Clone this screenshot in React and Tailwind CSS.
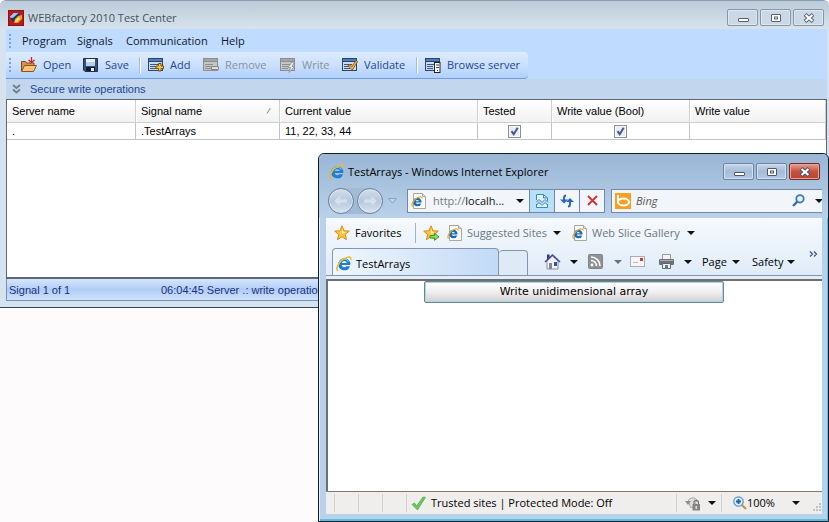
import React from 'react';

const UI = "font-['Open_Sans','Noto_Sans',sans-serif]";

function CenterLogo() {
  return (
    <svg width="16" height="16" viewBox="0 0 16 16" aria-hidden="true">
      <rect width="16" height="16" fill="#8f1016" />
      <rect x="1" y="1" width="14" height="14" fill="#b81c1c" />
      <path d="M2 7 6 3h5L9 6 5 9z" fill="#5a9fd8" />
      <path d="M2 7 6 3h3L5 8z" fill="#cfe4f3" />
      <path d="M3 8l4-2 4-3 1 3-5 6-3-1z" fill="#23306e" />
      <path d="M2 7 6 3h4L5 8z" fill="#9cc8ea" />
      <path d="M7 9 10 6l4-1v4l-4 4H6z" fill="#f0a51e" />
      <path d="M8 9.500 10.500 7.500 12 8l-3 4H7z" fill="#ffe37a" />
    </svg>
  );
}

function FolderIcon() {
  return (
    <svg width="17" height="16" viewBox="0 0 17 16" aria-hidden="true">
      <path d="M1.500 14V4.500h4l1 1.500h7.500v3" fill="#d8954a" stroke="#7a4a1a" />
      <path d="M1.500 14.500 4.500 8.500h12l-3 6z" fill="#f9c477" stroke="#8a5420" />
      <path d="M11.500 0v5M8.500 3 11.500 5.500 14.500 3" fill="none" stroke="#d81e1e" strokeWidth="1.300" />
    </svg>
  );
}

function DiskIcon() {
  return (
    <svg width="16" height="16" viewBox="0 0 16 16" aria-hidden="true">
      <path d="M.5 1.500h14v13H2l-1.500-1.500z" fill="#34507c" stroke="#1c3154" />
      <rect x="3" y="2" width="9" height="7" fill="#b9cfe8" />
      <rect x="3" y="2" width="9" height="3" fill="#e8f1fa" />
      <rect x="3" y="10" width="9" height="4" fill="#141c2a" />
      <rect x="8" y="11" width="3" height="3" fill="#e8eef6" />
    </svg>
  );
}

function FormIcon({ kind }) {
  const off = kind === 'remove' || kind === 'write';
  const dark = off ? '#8c8c8c' : '#34425c';
  const bar = off ? '#a5a5a5' : '#3f82d2';
  const fill = off ? '#c4c6ca' : '#c9dcf2';
  return (
    <svg width="16" height="16" viewBox="0 0 16 16" aria-hidden="true">
      <rect x=".5" y="1.500" width="14" height="12" fill={fill} stroke={dark} />
      <rect x="1" y="2" width="13" height="2" fill={bar} />
      <path d="M1 4.500h13" stroke={dark} />
      <path d="M2 7.500h8M2 9.500h6M2 11.500h6" stroke={off ? '#8f8f8f' : '#3d5680'} />
      {kind === 'add' && <path d="M10.500 6.500h2.500v2.500h2.500v2.500h-2.500v2.500h-2.500v-2.500H8v-2.500h2.500z" fill="#ffc83a" stroke="#7c4c10" />}
      {kind === 'remove' && <path d="M8.500 9.500h7v3h-7z" fill="#ddd" stroke="#888" />}
      {kind === 'write' && <path d="M12 5 8 10.500h2.500L9 15.500l5.500-6H12L14.500 5z" fill="#ececec" stroke="#8a8a8a" strokeWidth=".8" />}
      {kind === 'validate' && <path d="M6 8.500 8 7.500l1.800 2.200L14 3.500l1.700 1L10.300 13z" fill="#fbb034" stroke="#7c4c10" strokeWidth=".8" />}
      {kind === 'browse' && (
        <g>
          <rect x="9.500" y="5.500" width="5.500" height="10" fill="#fff" stroke="#222" />
          <path d="M11 8h3M11 10.500h3M12 13.500h1" stroke="#444" />
        </g>
      )}
    </svg>
  );
}

function EIcon() {
  return (
    <svg width="16" height="16" viewBox="0 0 16 16" aria-hidden="true" className="shrink-0">
      <path d="M8.300 2.200a6 6 0 0 0-6 6.100 6 6 0 0 0 11.700 1.900h-3.600a2.600 2.600 0 0 1-4.700-1.100h8.600a6 6 0 0 0-6-6.900zM5.800 7a2.600 2.600 0 0 1 5 0z" fill="#1f7fd0" />
      <path d="M3.500 6.500a5 5 0 0 1 9-1" fill="none" stroke="#6ec6f4" strokeWidth="1.200" />
      <path d="M2.200 14.800C-.8 13.500 1.800 7.600 6 4.200 10.200.8 15.400-.4 14.900 3.800" fill="none" stroke="#eeb92c" strokeWidth="1.500" />
    </svg>
  );
}

function PageIcon() {
  return (
    <svg width="16" height="16" viewBox="0 0 16 16" aria-hidden="true" className="shrink-0">
      <path d="M2.500.5h9l3 3v12h-12z" fill="#fdfdfd" stroke="#a8a8a0" />
      <path d="M11.500.5v3h3" fill="#ddd" stroke="#a8a8a0" />
      <path d="M6.300 4.800a4.100 4.100 0 0 0-4 4.200 4.100 4.100 0 0 0 8 1.400H7.700a1.800 1.800 0 0 1-3-.8h5.800a4.100 4.100 0 0 0-4.200-4.800zM4.700 8.200a1.700 1.700 0 0 1 3.200 0z" fill="#1b6cc0" />
      <path d="M1.800 13.500C-.3 12.300 1.600 8.500 4.600 6 7.600 3.600 11.300 2.800 11 5.600" fill="none" stroke="#e2ac28" strokeWidth="1.200" />
    </svg>
  );
}

function Star({ arrow }) {
  return (
    <svg width="17" height="16" viewBox="0 0 17 16" aria-hidden="true" className="shrink-0">
      <path d="M8 .8 10 5.800l5.300.3-4.100 3.400 1.400 5.200L8 11.800l-4.600 2.900 1.400-5.200L.7 6.100 6 5.800z" fill="#fdc53b" stroke="#d98a1c" />
      <path d="M8 3 9.200 6.800l3 .2L8 9z" fill="#fff0a8" />
      {arrow && <path d="M7 10.500h4.500V8.300l4.500 3.500-4.500 3.500v-2.300H7z" fill="#8be05a" stroke="#3a9426" />}
    </svg>
  );
}

function Caret({ muted }) {
  return (
    <svg width="8" height="4" viewBox="0 0 8 4" aria-hidden="true" className="shrink-0">
      <path d="M0 0h8L4 4z" fill={muted ? '#68717c' : '#111'} />
    </svg>
  );
}

function WindowGlyph({ kind, stroke }) {
  return (
    <svg width="14" height="12" viewBox="0 0 14 12" aria-hidden="true">
      {kind === 'min' && <rect x="2.500" y="6.500" width="10" height="3" rx=".5" fill="#fff" stroke={stroke} />}
      {kind === 'max' && (
        <g fill="#fff" stroke={stroke}>
          <rect x="2.500" y="2.500" width="9" height="7" rx=".5" />
          <rect x="5.500" y="5" width="3" height="2" />
        </g>
      )}
      {kind === 'close' && (
        <g fill="none">
          <path d="M3 2.500l8 7M11 2.500l-8 7" stroke={stroke} strokeWidth="4" />
          <path d="M3.600 3l6.800 6M10.400 3l-6.800 6" stroke="#fff" strokeWidth="2.200" />
        </g>
      )}
    </svg>
  );
}

function CenterWindowButton({ kind, label }) {
  return (
    <button aria-label={label} className="flex h-[17px] w-[31px] items-center justify-center rounded-xs border border-[#8795a8] bg-[#cbd9e6] shadow-[inset_0_0_0_1px_#dde7f0]">
      <WindowGlyph kind={kind} stroke="#57606e" />
    </button>
  );
}

function BrowserWindowButton({ kind, label }) {
  const tone =
    kind === 'close'
      ? 'border-[#7a2a26] bg-linear-to-b from-[#e3a094] via-[#c8503e] to-[#b8452e] shadow-[inset_0_0_0_1px_#e0a69c]'
      : 'border-[#6b83a3] bg-linear-to-b from-[#c6d7ea] via-[#a5bdd8] to-[#b3cae4] shadow-[inset_0_0_0_1px_#d3e1f0]';
  return (
    <button aria-label={label} className={'flex h-[17px] w-[31px] items-center justify-center rounded-xs border ' + tone}>
      <WindowGlyph kind={kind} stroke="#4b5666" />
    </button>
  );
}

function Grip() {
  return (
    <span className="flex w-[2px] flex-col gap-[2px]" aria-hidden="true">
      <i className="size-[2px] bg-[#7da1d6]" />
      <i className="size-[2px] bg-[#7da1d6]" />
      <i className="size-[2px] bg-[#7da1d6]" />
      <i className="size-[2px] bg-[#7da1d6]" />
    </span>
  );
}

function ToolButton({ icon, label, width, disabled }) {
  return (
    <button disabled={disabled} className={'flex shrink-0 items-center gap-[6px] ' + width + (disabled ? ' text-[#8b929c]' : ' text-[#1f4591]')}>
      <span className="shrink-0">{icon}</span>
      {label}
    </button>
  );
}

function Check({ label }) {
  return (
    <label className="mx-auto grid size-[13px] place-items-center">
      <input type="checkbox" defaultChecked aria-label={label} className="peer col-start-1 row-start-1 size-[13px] appearance-none border border-[#8a8f94] bg-[#e9ecf1] shadow-[inset_0_0_0_1px_#fafafa]" />
      <svg width="11" height="11" viewBox="0 0 11 11" aria-hidden="true" className="invisible col-start-1 row-start-1 peer-checked:visible">
        <path d="M2.500 5.200 4.700 8.200 8.700 1.800" fill="none" stroke="#44588f" strokeWidth="2" />
      </svg>
    </label>
  );
}

function SignalTable() {
  const th = 'border-r border-b border-[#d0d0d0] px-[5px] text-left font-normal shadow-[inset_1px_1px_0_#fff]';
  const td = 'border-r border-b border-[#c3c3c3] px-[5px]';
  return (
    <table className="w-full table-fixed border-separate border-spacing-0 font-['Liberation_Sans',Arial,sans-serif] text-[11px] leading-4 text-black">
      <colgroup>
        <col className="w-[129px]" />
        <col className="w-[144px]" />
        <col className="w-[198px]" />
        <col className="w-[74px]" />
        <col className="w-[138px]" />
        <col />
      </colgroup>
      <thead>
        <tr className="h-[23px] bg-linear-to-b from-white to-[#f1f1f1]">
          <th className={th}>Server name</th>
          <th className={th}>
            <span className="flex items-center justify-between">
              Signal name
              <svg width="8" height="6" viewBox="0 0 8 6" aria-hidden="true"><path d="M1 5.500 4 .5v1" fill="none" stroke="#888" /></svg>
            </span>
          </th>
          <th className={th}>Current value</th>
          <th className={th}>Tested</th>
          <th className={th}>Write value (Bool)</th>
          <th className={th}>Write value</th>
        </tr>
      </thead>
      <tbody>
        <tr className="h-[17px]">
          <td className={td}>.</td>
          <td className={td}>.TestArrays</td>
          <td className={td}>11, 22, 33, 44</td>
          <td className={td}><Check label="Tested" /></td>
          <td className={td}><Check label="Write value (Bool)" /></td>
          <td className={td}></td>
        </tr>
      </tbody>
    </table>
  );
}

function TestCenterWindow() {
  return (
    <section className={'flex flex-col rounded-t-md border-t border-b border-t-[#8c9dad] border-b-[#3a4450] bg-[#d5e3f0] pr-[2px] pb-[6px] pl-[6px] text-[11px] leading-4 ' + UI}>
      <header className="-mr-[2px] -ml-[6px] flex h-[28px] items-center gap-[4px] rounded-t-md bg-linear-to-b from-[#bccbd8] to-[#d6e3ec] pt-[5px] pr-[5px] pl-[8px]">
        <CenterLogo />
        <h1 className="flex-1 text-[#46525f]">WEBfactory 2010 Test Center</h1>
        <div className="flex gap-[2px]">
          <CenterWindowButton kind="min" label="Minimize" />
          <CenterWindowButton kind="max" label="Maximize" />
          <CenterWindowButton kind="close" label="Close" />
        </div>
      </header>
      <nav className="flex h-[23px] items-center bg-[#bfdbff] pl-[3px] text-[#10182c]">
        <Grip />
        <button className="ml-[11px] w-[55px] text-left">Program</button>
        <button className="w-[49px] text-left">Signals</button>
        <button className="w-[95px] text-left">Communication</button>
        <button>Help</button>
      </nav>
      <div className="flex h-[27px] bg-[#bfdbff]">
        <div className="flex h-[27px] w-[522px] items-center rounded-r-sm border-b border-[#6f9fdc] bg-linear-to-b from-[#dcebff] via-[#cbe0fd] to-[#b0d0fb] pl-[3px]">
          <Grip />
          <ToolButton icon={<FolderIcon />} label="Open" width="ml-[9px] w-[63px]" />
          <ToolButton icon={<DiskIcon />} label="Save" width="w-[56px]" />
          <span className="mr-[7px] h-4 border-l border-r border-l-[#9dbde8] border-r-white" />
          <ToolButton icon={<FormIcon kind="add" />} label="Add" width="w-[55px]" />
          <ToolButton icon={<FormIcon kind="remove" />} label="Remove" width="w-[77px]" disabled />
          <ToolButton icon={<FormIcon kind="write" />} label="Write" width="w-[62px]" disabled />
          <ToolButton icon={<FormIcon kind="validate" />} label="Validate" width="w-[74px]" />
          <span className="mr-[7px] h-4 border-l border-r border-l-[#9dbde8] border-r-white" />
          <ToolButton icon={<FormIcon kind="browse" />} label="Browse server" width="" />
        </div>
      </div>
      <button className="flex h-[20px] items-center gap-[9px] bg-[#c2d7ee] pl-[6px] text-left font-['Liberation_Sans',Arial,sans-serif] text-[11px] text-[#1f4591]">
        <svg width="9" height="10" viewBox="0 0 9 10" aria-hidden="true">
          <path d="M1 1l3.500 3L8 1M1 5.500l3.500 3L8 5.500" fill="none" stroke="#6e7f8e" strokeWidth="1.800" />
        </svg>
        Secure write operations
      </button>
      <div className="h-[180px] border border-b-2 border-[#5c6775] bg-white">
        <SignalTable />
      </div>
      <footer className="flex h-[22px] items-center border border-t-0 border-[#7790b5] bg-linear-to-b from-[#d6e6fd] via-[#b0cdf6] to-[#d0e2fc] pl-[2px] font-['Liberation_Sans',Arial,sans-serif] text-[11px] text-[#1c2f82]">
        <span className="w-[152px]">Signal 1 of 1</span>
        <span>06:04:45 Server .: write operation</span>
      </footer>
    </section>
  );
}

function NavCircle({ label, flip }) {
  return (
    <button aria-label={label} className="flex size-[26px] items-center justify-center rounded-full border border-[#6d819b] bg-linear-to-b from-[#d3dfeb] via-[#b5c8dc] to-[#d8e5f2] shadow-[inset_0_0_0_1px_#dce7f2]">
      <svg width="16" height="14" viewBox="0 0 16 14" aria-hidden="true" className={flip ? 'rotate-180' : ''}>
        <path d="M7 1v4h7v4H7v4L1 7z" fill="#d6e1ec" stroke="#c3d2e2" strokeLinejoin="round" />
      </svg>
    </button>
  );
}

function AddressBar() {
  return (
    <div className="flex h-[35px] items-center pl-[2px]">
      <div className="flex shrink-0 items-center gap-[3px] rounded-full bg-[#a3bad6]">
        <NavCircle label="Back" />
        <NavCircle label="Forward" flip />
      </div>
      <button aria-label="Recent pages" className="ml-[5px] shrink-0">
        <svg width="9" height="6" viewBox="0 0 9 6" aria-hidden="true"><path d="M.5.5h8l-4 4.500z" fill="#c3d5e9" stroke="#8ba1bd" /></svg>
      </button>
      <div className="ml-[10px] flex h-[24px] w-[198px] shrink-0 border border-[#7188a8] bg-[#f2f6fb]">
        <label className="flex min-w-0 flex-1 items-center pl-[3px]">
          <PageIcon />
          <span className="ml-[6px] flex-1 truncate text-[#111]"><span className="text-[#777]">http://</span>localh...</span>
        </label>
        <button aria-label="Address history" className="px-[5px]"><Caret /></button>
        <button aria-label="Compatibility view" className="flex w-[25px] items-center justify-center border-l border-[#7188a8] bg-[#b9e0f8]">
          <svg width="12" height="14" viewBox="0 0 12 14" aria-hidden="true">
            <path d="M.5 6V.5h7l4 3.500v3M.5 10v3.500h11V10" fill="#e6f5ff" stroke="#3489c8" />
            <path d="M0 8.500 3 5.500l3 3 3-3 3 3M0 11.500l3-3 3 3 3-3 3 3" fill="none" stroke="#3489c8" />
            <path d="M7.500.5v3.500h4" fill="none" stroke="#3489c8" />
          </svg>
        </button>
        <button aria-label="Refresh" className="flex w-[25px] items-center justify-center border-l border-[#7188a8]">
          <svg width="14" height="14" viewBox="0 0 14 14" aria-hidden="true">
            <path d="M6 1.500C4.500 1.500 4 2.500 4 4v3M8 12.500c1.500 0 2-1 2-2.500V7" fill="none" stroke="#2a68b8" strokeWidth="2" />
            <path d="M0 5.500h8L4 9.500zM6 8h8l-4-4z" fill="#2a68b8" />
          </svg>
        </button>
        <button aria-label="Stop" className="flex w-[25px] items-center justify-center border-l border-[#7188a8]">
          <svg width="11" height="11" viewBox="0 0 11 11" aria-hidden="true"><path d="M1 1l9 9M10 1l-9 9" stroke="#cc3a3a" strokeWidth="2" /></svg>
        </button>
      </div>
      <div className="ml-[6px] flex h-[24px] min-w-0 flex-1 items-center border border-r-0 border-[#7188a8] bg-[#f2f6fb] pl-[3px]">
        <svg width="16" height="16" viewBox="0 0 16 16" aria-hidden="true" className="shrink-0">
          <rect width="16" height="16" fill="#fa9f1e" />
          <path d="M3 2v8" stroke="#fff" strokeWidth="2" />
          <ellipse cx="8.500" cy="9" rx="5.500" ry="3.500" fill="none" stroke="#fff" strokeWidth="2" />
        </svg>
        <input aria-label="Search" placeholder="Bing" className="ml-[5px] min-w-0 flex-1 bg-transparent italic outline-none placeholder:text-[#555]" />
        <button aria-label="Run search" className="mr-[10px]">
          <svg width="13" height="13" viewBox="0 0 13 13" aria-hidden="true">
            <circle cx="8" cy="4.800" r="3.700" fill="#e6f2fc" stroke="#3a78bc" strokeWidth="1.800" />
            <path d="M5.300 7.600 1 12" stroke="#3a6aa4" strokeWidth="2.300" />
          </svg>
        </button>
        <button aria-label="Search providers" className="w-[7px] shrink-0 overflow-hidden"><Caret /></button>
      </div>
    </div>
  );
}

function FavoritesBar() {
  return (
    <div className="flex h-[30px] items-center pl-[8px] text-[#6d7681]">
      <button className="flex w-[81px] shrink-0 items-center gap-[4px] text-black"><Star />Favorites</button>
      <span className="h-5 w-px bg-[#9fb2c8]" />
      <button aria-label="Add to favorites bar" className="ml-[7px] w-[24px] shrink-0"><Star arrow /></button>
      <button className="flex w-[125px] shrink-0 items-center gap-[4px]"><PageIcon /><span className="flex-1 text-left whitespace-nowrap">Suggested Sites</span><span className="mr-[11px]"><Caret /></span></button>
      <button className="flex w-[123px] shrink-0 items-center gap-[4px]"><PageIcon /><span className="flex-1 text-left whitespace-nowrap">Web Slice Gallery</span><Caret /></button>
    </div>
  );
}

function CommandBar() {
  return (
    <div className="flex h-[28px] items-center border-b border-[#8296b0] pl-[6px]">
      <button className="flex h-[27px] w-[167px] shrink-0 items-center gap-[4px] self-end rounded-t-sm border border-b-0 border-[#8296b0] bg-linear-to-r from-[#f0f6fd] to-[#c2daf6] pt-[3px] pl-[3px] text-black">
        <EIcon />
        TestArrays
      </button>
      <button aria-label="New tab" className="h-[25px] w-[29px] shrink-0 self-end rounded-t-sm border border-b-0 border-l-0 border-[#8296b0] bg-[#dfeaf7]" />
      <div className="ml-[16px] flex min-w-0 flex-1 items-center text-black">
        <button aria-label="Home" className="flex w-[44px] shrink-0 items-center gap-[9px]">
          <svg width="17" height="17" viewBox="0 0 17 17" aria-hidden="true">
            <path d="M3 8v8h11V8L8.500 3z" fill="#f4f3f8" stroke="#8c8ea6" />
            <path d="M1 9 8.500 2 16 9" fill="none" stroke="#474d92" strokeWidth="1.600" />
            <path d="M3 1.500v5l2.500-2.500V1.500z" fill="#2b3380" />
            <rect x="5" y="10" width="3" height="6" fill="#86849c" />
            <rect x="10" y="9" width="3" height="4" fill="#3054a4" />
          </svg>
          <Caret />
        </button>
        <button aria-label="Feeds" className="flex w-[42px] shrink-0 items-center gap-[11px]">
          <svg width="15" height="15" viewBox="0 0 15 15" aria-hidden="true">
            <rect x=".5" y=".5" width="14" height="14" rx="1" fill="#909294" stroke="#808285" />
            <circle cx="4" cy="11" r="1.400" fill="#fff" />
            <path d="M3 6.500a5.500 5.500 0 0 1 5.500 5.500M3 3a9 9 0 0 1 9 9" fill="none" stroke="#fff" strokeWidth="1.500" />
          </svg>
          <Caret muted />
        </button>
        <button aria-label="Read mail" className="w-[28px] shrink-0">
          <svg width="15" height="11" viewBox="0 0 15 11" aria-hidden="true">
            <rect x=".5" y=".5" width="14" height="10" fill="#f6f6f6" stroke="#a9adb4" />
            <rect x="10" y="2" width="3" height="3" fill="#cf3c34" />
            <path d="M3 6.500h5" stroke="#bbb" />
          </svg>
        </button>
        <button aria-label="Print" className="flex w-[44px] shrink-0 items-center gap-[9px]">
          <svg width="17" height="16" viewBox="0 0 17 16" aria-hidden="true">
            <path d="M4.500.5h8v5h-8z" fill="#f4f4f4" stroke="#999" />
            <rect x="1" y="5" width="15" height="6" rx="1" fill="#6d7177" />
            <path d="M2 6.500h13" stroke="#a7adb4" />
            <path d="M4.500 9.500h8v5h-8z" fill="#f0f0f0" stroke="#666" />
            <rect x="7" y="11" width="3" height="4" fill="#4d7c9c" />
          </svg>
          <Caret />
        </button>
        <button className="flex w-[50px] shrink-0 items-center gap-[5px]">Page <Caret /></button>
        <button className="flex shrink-0 items-center gap-[4px]">Safety <Caret /></button>
        <button aria-label="More commands" className="mb-[16px] ml-auto pr-[4px]">
          <svg width="9" height="6" viewBox="0 0 9 6" aria-hidden="true"><path d="M1 .5 3.500 3 1 5.500M5 .5 7.500 3 5 5.500" fill="none" stroke="#3c4e72" strokeWidth="1.200" /></svg>
        </button>
      </div>
    </div>
  );
}

function StatusBar() {
  return (
    <footer className="flex h-[23px] items-center border-t border-[#7d7d7d] bg-[#f0eeed] text-black">
      <span className="h-[18px] w-[9px] border-r border-[#d2d0ce]" />
      <span className="h-[18px] w-[24px] border-r border-[#d2d0ce]" />
      <span className="h-[18px] w-[24px] border-r border-[#d2d0ce]" />
      <span className="h-[18px] w-[24px] border-r border-[#d2d0ce]" />
      <svg width="15" height="15" viewBox="0 0 15 15" aria-hidden="true" className="ml-[4px] shrink-0">
        <path d="M1 8.500 3.500 7l2 3L12 1l2.500.3L6.500 14z" fill="#6cc85c" stroke="#4aa842" strokeWidth=".7" />
      </svg>
      <span className="ml-[5px] flex-1 whitespace-nowrap">Trusted sites | Protected Mode: Off</span>
      <button aria-label="Privacy report" className="flex h-[18px] w-[45px] shrink-0 items-center gap-[7px] border-l border-[#d2d0ce] pl-[8px]">
        <svg width="16" height="15" viewBox="0 0 16 15" aria-hidden="true">
          <path d="M3 5.500A5 5 0 0 1 12 4L9 10 6 12z" fill="#dedede" stroke="#a8a8a8" />
          <path d="M0 5h6L3 9z" fill="#8c8c8c" />
          <path d="M9 8V6.500a2.200 2.200 0 0 1 4.400 0V8" fill="none" stroke="#777" strokeWidth="1.300" />
          <rect x="7.500" y="8" width="7.500" height="6.500" fill="#858585" />
          <rect x="10.500" y="10" width="1.500" height="3" fill="#ddd" />
        </svg>
        <Caret />
      </button>
      <button className="flex h-[18px] w-[101px] shrink-0 items-center border-l border-[#d2d0ce] pl-[11px]">
        <svg width="14" height="14" viewBox="0 0 14 14" aria-hidden="true">
          <circle cx="5.500" cy="5.500" r="4.700" fill="#dceefc" stroke="#5a93c8" strokeWidth="1.200" />
          <path d="M5.500 3v5M3 5.500h5" stroke="#1e5faa" strokeWidth="1.800" />
          <path d="M9 9l4 4" stroke="#c29254" strokeWidth="2.200" />
        </svg>
        <span className="w-[45px] text-left">100%</span>
        <Caret />
        <svg width="9" height="9" viewBox="0 0 9 9" aria-hidden="true" className="mt-auto ml-auto">
          <path d="M6 0h2v2H6zM3 3h2v2H3zM6 3h2v2H6zM0 6h2v2H0zM3 6h2v2H3zM6 6h2v2H6z" fill="#c4c2c0" />
        </svg>
      </button>
    </footer>
  );
}

function BrowserWindow() {
  return (
    <section className={'absolute top-[153px] right-0 bottom-0 left-[318px] flex flex-col rounded-t-md border border-[#111c2a] bg-[#b9d1ea] text-[11px] leading-4 shadow-[inset_1px_1px_0_#e8f1fa,inset_0_-2px_0_#56c3dc,inset_-1px_0_0_#56c3dc] ' + UI}>
      <div className="flex flex-1 flex-col rounded-t-md bg-linear-to-b from-[#9ab6d5] to-[#b9d1ea] bg-[length:100%_64px] bg-no-repeat pr-[6px] pb-[7px] pl-[7px]">
        <header className="flex h-[29px] items-center gap-[3px] pt-[6px] pl-[3px]">
          <EIcon />
          <h2 className="flex-1 text-black">TestArrays - Windows Internet Explorer</h2>
          <div className="flex gap-[2px] pr-[2px]">
            <BrowserWindowButton kind="min" label="Minimize" />
            <BrowserWindowButton kind="max" label="Maximize" />
            <BrowserWindowButton kind="close" label="Close" />
          </div>
        </header>
        <AddressBar />
        <div className="flex flex-1 flex-col bg-[#e4eefa]">
          <div className="bg-linear-to-b from-[#f6f9fd] to-[#dfebf9]">
            <FavoritesBar />
            <CommandBar />
          </div>
          <main className="mt-[3px] flex-1 border-t-2 border-l-2 border-[#6f6f6f] bg-white pr-[2px]">
            <button className="mx-auto block h-[22px] w-[300px] rounded-xs border border-[#5f8a99] bg-linear-to-b from-white via-[#efeff0] to-[#cfcfd3] font-['DejaVu_Sans',sans-serif] text-[11px] text-black shadow-[inset_0_0_0_1px_#b6d3da]">
              Write unidimensional array
            </button>
          </main>
          <StatusBar />
        </div>
      </div>
    </section>
  );
}

export default function App() {
  return (
    <div className="relative min-h-screen overflow-hidden bg-[#fdfbfc]">
      <TestCenterWindow />
      <BrowserWindow />
    </div>
  );
}
